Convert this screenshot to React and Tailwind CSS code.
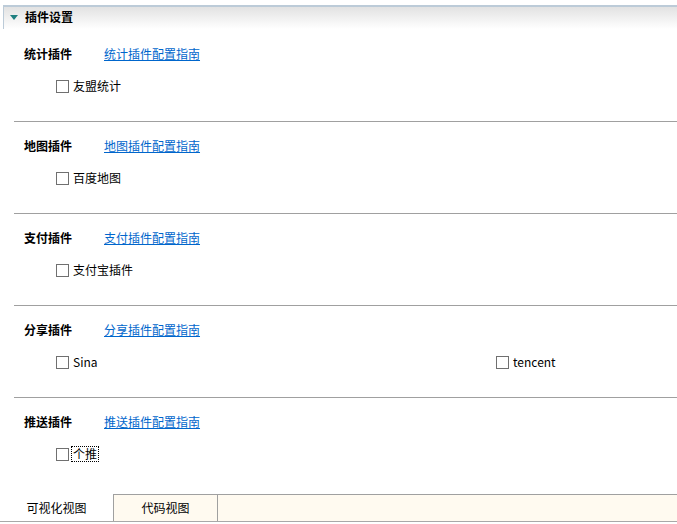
import React from 'react';

const sections = [
  { title: '统计插件', link: '统计插件配置指南', items: ['友盟统计'] },
  { title: '地图插件', link: '地图插件配置指南', items: ['百度地图'] },
  { title: '支付插件', link: '支付插件配置指南', items: ['支付宝插件'] },
  { title: '分享插件', link: '分享插件配置指南', items: ['Sina', 'tencent'] },
  { title: '推送插件', link: '推送插件配置指南', items: ['个推'], focused: true },
];

function Check({ label, focused }) {
  return (
    <label className="flex items-center h-[16px]">
      <span className="w-[13px] h-[13px] border border-[#707070] bg-white" />
      <span
        className={
          'ml-[3px] leading-[14px] px-[1px] ' +
          (focused ? 'outline outline-1 outline-dotted outline-black' : '')
        }
      >
        {label}
      </span>
    </label>
  );
}

function Section({ s, first }) {
  return (
    <div className={first ? '' : 'border-t border-[#a0a0a0] ml-[14px]'}>
      <div className={first ? 'pl-[24px]' : 'pl-[10px]'}>
        <div className={'flex items-center h-[16px] ' + (first ? 'mt-[17px]' : 'mt-[16px]')}>
          <span className="w-[80px] font-bold">{s.title}</span>
          <a href="#" className="text-[#0066cc] underline">{s.link}</a>
        </div>
        <div className="flex mt-[16px] pl-[32px] mb-[27px]">
          <div className="w-[440px]">
            <Check label={s.items[0]} focused={s.focused} />
          </div>
          {s.items[1] && <Check label={s.items[1]} />}
        </div>
      </div>
    </div>
  );
}

export default function App() {
  return (
    <div
      className="w-[677px] h-[524px] bg-white text-black text-[12px] flex flex-col overflow-hidden"
      style={{ fontFamily: '"Noto Sans CJK SC", "Noto Sans", sans-serif' }}
    >
      <div className="mt-[5px] ml-[3px] h-[24px] border-t-2 border-l border-[#bccbd8] bg-gradient-to-b from-[#e2e2e2] to-white flex items-center pl-[6px] pb-[2px]">
        <svg width="8" height="5" viewBox="0 0 8 5" className="mr-[7px]">
          <path d="M0 0 H8 L4 5 Z" fill="#1f7f80" />
        </svg>
        <span className="font-bold text-[12px]">插件设置</span>
      </div>
      <div className="flex-1">
        {sections.map((s, i) => (
          <Section key={s.title} s={s} first={i === 0} />
        ))}
      </div>
      <div className="flex h-[28px] border-b border-[#a8a8a8] mb-[2px]">
        <div className="w-[113px] bg-white flex items-center justify-center">可视化视图</div>
        <div className="flex-1 flex bg-[#fffaf0] border-t border-[#a0a0a0]">
          <div className="w-[105px] border-l border-r border-[#a0a0a0] flex items-center justify-center">代码视图</div>
        </div>
      </div>
    </div>
  );
}
